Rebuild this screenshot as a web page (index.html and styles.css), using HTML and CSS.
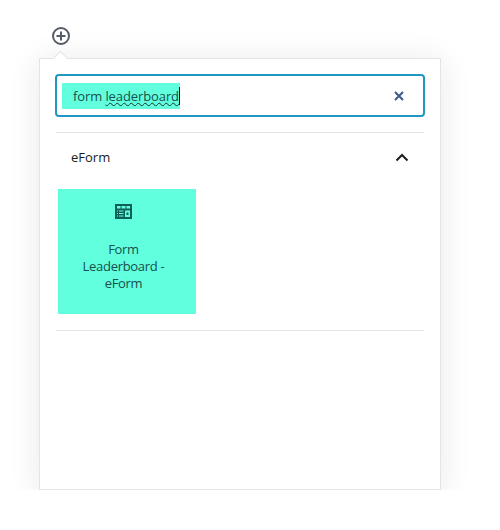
FILE: index.html
```html
<!DOCTYPE html>
<html lang="en">

<head>
    <meta charset="UTF-8">
    <title>Block Inserter</title>
    <link rel="stylesheet" href="styles.css">
</head>

<body>
    <div class="inserter">
        <button class="toggle" aria-label="Add block">
            <svg width="20" height="20" viewBox="0 0 20 20">
                <circle cx="10" cy="10" r="8" fill="none" stroke="#555d66" stroke-width="2"/>
                <path d="M10 5.500v9M5.500 10h9" fill="none" stroke="#555d66" stroke-width="2"/>
            </svg>
        </button>

        <div class="popover">
            <div class="search">
                <span class="query">form <span class="misspelled">leaderboard</span><span class="caret"></span></span>
                <svg class="clear" width="10" height="10" viewBox="0 0 10 10">
                    <path d="M1 1l8 8M9 1l-8 8" fill="none" stroke="#3a5a8c" stroke-width="2"/>
                </svg>
            </div>

            <div class="panel">
                <div class="panel-head">
                    <span>eForm</span>
                    <svg width="14" height="9" viewBox="0 0 14 9">
                        <path d="M1.500 7.500L7 2l5.500 5.500" fill="none" stroke="#191e23" stroke-width="2"/>
                    </svg>
                </div>
                <div class="block-list">
                    <div class="block-item">
                        <svg class="block-icon" width="17" height="15" viewBox="0 0 17 15">
                            <path fill-rule="evenodd" fill="#0e5f58" d="M0 0h17v15H0zM2 2v2.500h3.500V2zM6.500 2v2.500h4V2zM11.500 2v2.500H15V2zM2 6.500v1h1v-1zM4 6.500v1h4.500v-1zM2 9v1h1V9zM4 9v1h4.500V9zM2 11.500v1h1v-1zM4 11.500v1h4.500v-1zM10 6.500V13h5V6.500zM11.500 8.500h2V11h-2z"/>
                        </svg>
                        <span class="block-title">Form Leaderboard - eForm</span>
                    </div>
                </div>
            </div>
        </div>
    </div>
</body>

</html>
```

FILE: styles.css
```css
:root {
    --mint: #62ffdf;
    --border: #e2e4e7;
    --accent: #1e97c1;
    --text: #191e23;
}

body {
    font-family: 'Open Sans', sans-serif;
    font-size: 13px;
    color: var(--text);
    background-color: white;
    margin: 0;
    padding: 0;
}

.inserter {
    padding: 26px 59px 0 39px;
}

.toggle {
    display: block;
    width: 20px;
    height: 20px;
    margin: 0 0 12px 12px;
    padding: 0;
    border: none;
    background: none;
}

.popover {
    position: relative;
    box-sizing: border-box;
    width: 402px;
    height: 432px;
    padding: 15px 15px 0;
    background-color: white;
    border: 1px solid var(--border);
    box-shadow: 0 3px 30px rgba(25, 30, 35, 0.1);
}

.popover::before {
    content: "";
    position: absolute;
    top: -6px;
    left: 15px;
    width: 10px;
    height: 10px;
    background-color: white;
    border-top: 1px solid var(--border);
    border-left: 1px solid var(--border);
    transform: rotate(45deg);
}

.search {
    display: flex;
    align-items: center;
    justify-content: space-between;
    box-sizing: border-box;
    height: 43px;
    padding: 0 19px 0 5px;
    border: 2px solid var(--accent);
    border-radius: 4px;
}

.query {
    display: flex;
    align-items: center;
    height: 26px;
    width: 118px;
    box-sizing: border-box;
    padding-left: 11px;
    white-space: pre;
    letter-spacing: -0.1px;
    background-color: var(--mint);
    color: #17504a;
}

.misspelled {
    text-decoration: underline wavy #1c3330 1px;
}

.caret {
    width: 1px;
    height: 18px;
    background-color: #111;
}

.panel {
    margin: 15px 1px 0;
    border-top: 1px solid var(--border);
    border-bottom: 1px solid var(--border);
    padding-bottom: 16px;
}

.panel-head {
    display: flex;
    align-items: center;
    justify-content: space-between;
    box-sizing: border-box;
    height: 49px;
    padding: 0 15px 2px;
}

.panel-head svg {
    margin-top: 2px;
}

.block-list {
    display: flex;
    padding: 7px 0 0 2px;
}

.block-item {
    display: flex;
    flex-direction: column;
    align-items: center;
    box-sizing: border-box;
    width: 138px;
    height: 125px;
    padding: 15px 25px 0 18px;
    background-color: var(--mint);
    color: #17504a;
    text-align: center;
    line-height: 17px;
    letter-spacing: -0.3px;
}

.block-icon {
    display: block;
    margin-bottom: 22px;
}
```
